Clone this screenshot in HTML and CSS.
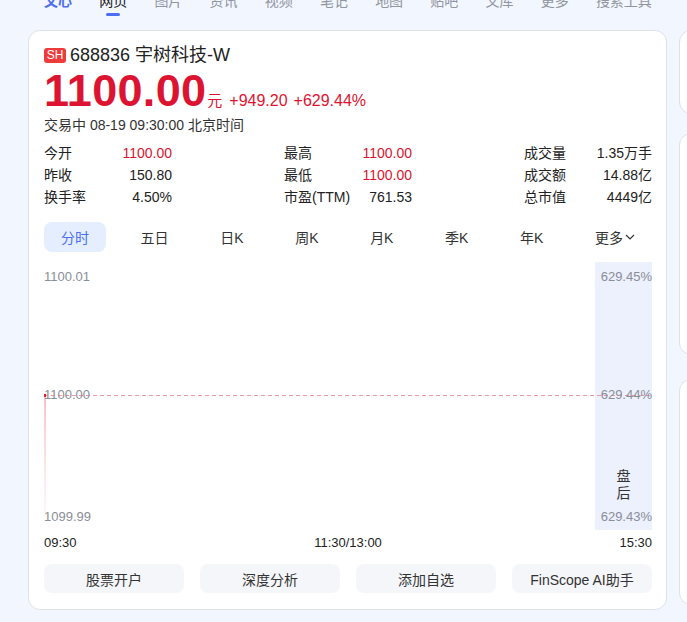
FILE: index.html
```html
<!DOCTYPE html>
<html lang="zh-CN">
<head>
<meta charset="utf-8">
<title>宇树科技-W</title>
<link rel="stylesheet" href="styles.css">
</head>
<body>
<nav class="nav">
  <a class="nav-item brand">文心</a>
  <a class="nav-item active">网页</a>
  <a class="nav-item">图片</a>
  <a class="nav-item">资讯</a>
  <a class="nav-item">视频</a>
  <a class="nav-item">笔记</a>
  <a class="nav-item">地图</a>
  <a class="nav-item">贴吧</a>
  <a class="nav-item">文库</a>
  <a class="nav-item">更多</a>
  <a class="nav-item">搜索工具</a>
</nav>
<div class="layout">
  <section class="card main">
    <div class="title-row">
      <span class="badge">SH</span>
      <span class="title">688836 宇树科技-W</span>
    </div>
    <div class="price-row">
      <span class="price">1100.00</span>
      <span class="unit">元</span>
      <span class="chg">+949.20</span>
      <span class="chg">+629.44%</span>
    </div>
    <div class="status">交易中 08-19 09:30:00 北京时间</div>
    <div class="stats">
      <div class="stat"><span>今开</span><span class="up">1100.00</span></div>
      <div class="stat"><span>最高</span><span class="up">1100.00</span></div>
      <div class="stat"><span>成交量</span><span>1.35万手</span></div>
      <div class="stat"><span>昨收</span><span>150.80</span></div>
      <div class="stat"><span>最低</span><span class="up">1100.00</span></div>
      <div class="stat"><span>成交额</span><span>14.88亿</span></div>
      <div class="stat"><span>换手率</span><span>4.50%</span></div>
      <div class="stat"><span>市盈(TTM)</span><span>761.53</span></div>
      <div class="stat"><span>总市值</span><span>4449亿</span></div>
    </div>
    <div class="tabs">
      <span class="tab active">分时</span>
      <span class="tab">五日</span>
      <span class="tab">日K</span>
      <span class="tab">周K</span>
      <span class="tab">月K</span>
      <span class="tab">季K</span>
      <span class="tab">年K</span>
      <span class="tab more">更多<svg class="chev" width="10" height="6" viewBox="0 0 10 6"><path d="M1 1l4 4 4-4" fill="none" stroke="#333" stroke-width="1.2"/></svg></span>
    </div>
    <div class="chart">
      <div class="band"><span class="band-text">盘<br>后</span></div>
      <svg class="lines" width="608" height="268" viewBox="0 0 608 268">
        <defs>
          <linearGradient id="fade" x1="0" y1="0" x2="0" y2="1">
            <stop offset="0" stop-color="#f6b9bf" stop-opacity="0.9"/>
            <stop offset="1" stop-color="#fde6e8" stop-opacity="0.4"/>
          </linearGradient>
        </defs>
        <rect x="0" y="133" width="2" height="118" fill="url(#fade)"/>
        <line x1="0" y1="133.5" x2="608" y2="133.5" stroke="#ec9aa1" stroke-width="1" stroke-dasharray="4 3"/>
        <rect x="0" y="132" width="2" height="3" fill="#e0202c"/>
      </svg>
      <span class="ylab l top">1100.01</span>
      <span class="ylab l mid">1100.00</span>
      <span class="ylab l bot">1099.99</span>
      <span class="ylab r top">629.45%</span>
      <span class="ylab r mid">629.44%</span>
      <span class="ylab r bot">629.43%</span>
    </div>
    <div class="axis"><span>09:30</span><span>11:30/13:00</span><span>15:30</span></div>
    <div class="actions">
      <button class="btn">股票开户</button>
      <button class="btn">深度分析</button>
      <button class="btn">添加自选</button>
      <button class="btn">FinScope AI助手</button>
    </div>
  </section>
  <aside class="side">
    <div class="card side-card s1"></div>
    <div class="card side-card s2"></div>
    <div class="card side-card s3"></div>
  </aside>
</div>
</body>
</html>
```
FILE: styles.css
```css
* { box-sizing: border-box; }
html, body { margin: 0; padding: 0; }
body {
  background: #f2f6fe;
  font-family: "Liberation Sans", "Noto Sans CJK SC", sans-serif;
  color: #333;
  overflow: hidden;
  width: 687px;
  height: 622px;
}
.nav {
  display: flex;
  gap: 27.2px;
  padding-left: 44px;
  margin-top: -9px;
  height: 25px;
}
.nav-item {
  display: flex;
  flex-direction: column;
  align-items: center;
  font-size: 14px;
  line-height: 20px;
  color: #9195a0;
  white-space: nowrap;
}
.nav-item.brand { color: #4e6ef2; font-weight: bold; }
.nav-item.active { color: #222; }
.nav-item.active::after {
  content: "";
  display: block;
  width: 14px;
  height: 3px;
  margin-top: 2px;
  border-radius: 2px;
  background: #4e6ef2;
}
.layout {
  display: flex;
  gap: 12px;
  padding-left: 28px;
  margin-top: 14px;
}
.card {
  background: #fff;
  border: 1px solid #dde1e9;
  border-radius: 12px;
}
.main {
  width: 639px;
  flex: none;
  padding: 12px 14px 16px 15px;
}
.title-row {
  display: flex;
  align-items: center;
  height: 24px;
  gap: 4px;
}
.badge {
  display: inline-block;
  width: 22px;
  height: 15px;
  line-height: 15px;
  text-align: center;
  font-size: 12px;
  color: #fff;
  background: #ee3b3b;
  border-radius: 3px;
}
.title { font-size: 18px; color: #222; line-height: 24px; }
.price-row {
  display: flex;
  align-items: baseline;
  height: 48px;
  color: #dc1431;
}
.price {
  font-size: 45px;
  font-weight: bold;
  line-height: 48px;
  letter-spacing: 0.3px;
}
.unit { font-size: 15px; margin-left: 1px; }
.chg { font-size: 16px; margin-left: 6px; }
.unit + .chg { margin-left: 7px; }
.status { font-size: 14px; line-height: 20px; color: #333; }
.stats {
  display: grid;
  grid-template-columns: repeat(3, 128px);
  justify-content: space-between;
  margin-top: 7px;
}
.stat {
  display: flex;
  justify-content: space-between;
  font-size: 14px;
  line-height: 22px;
  color: #222;
}
.stat .up { color: #dc1431; }
.tabs {
  display: flex;
  justify-content: space-between;
  margin-top: 14px;
}
.tab {
  display: flex;
  align-items: center;
  height: 30px;
  padding: 0 17px;
  font-size: 14px;
  color: #333;
  border-radius: 8px;
}
.tab.active { background: #e5eefe; color: #4e6ef2; }
.chev { margin-left: 2px; }
.chart {
  position: relative;
  height: 268px;
  margin-top: 10px;
}
.band {
  position: absolute;
  right: 0;
  top: 0;
  bottom: 0;
  width: 57px;
  background: #edf0fd;
}
.band-text {
  position: absolute;
  left: 0;
  right: 0;
  top: 206px;
  text-align: center;
  font-size: 14px;
  line-height: 17px;
  color: #333;
}
.lines { position: absolute; left: 0; top: 0; }
.ylab {
  position: absolute;
  font-size: 13px;
  line-height: 14px;
  color: #8a8e97;
}
.ylab.l { left: 0; }
.ylab.r { right: 0; }
.ylab.top { top: 8px; }
.ylab.mid { top: 126px; }
.ylab.bot { top: 248px; }
.axis {
  display: flex;
  justify-content: space-between;
  margin-top: 5px;
  font-size: 13px;
  line-height: 16px;
  color: #222;
}
.actions {
  display: grid;
  grid-template-columns: repeat(4, 1fr);
  gap: 16px;
  margin-top: 13px;
}
.btn {
  height: 29px;
  border: 0;
  border-radius: 8px;
  background: #f5f6fa;
  font-family: inherit;
  font-size: 14px;
  color: #333;
  padding: 0;
}
.side {
  display: flex;
  flex-direction: column;
  width: 300px;
  flex: none;
}
.s1 { height: 84px; }
.s2 { height: 222px; margin-top: 19px; }
.s3 { height: 226px; margin-top: 24px; }
```
